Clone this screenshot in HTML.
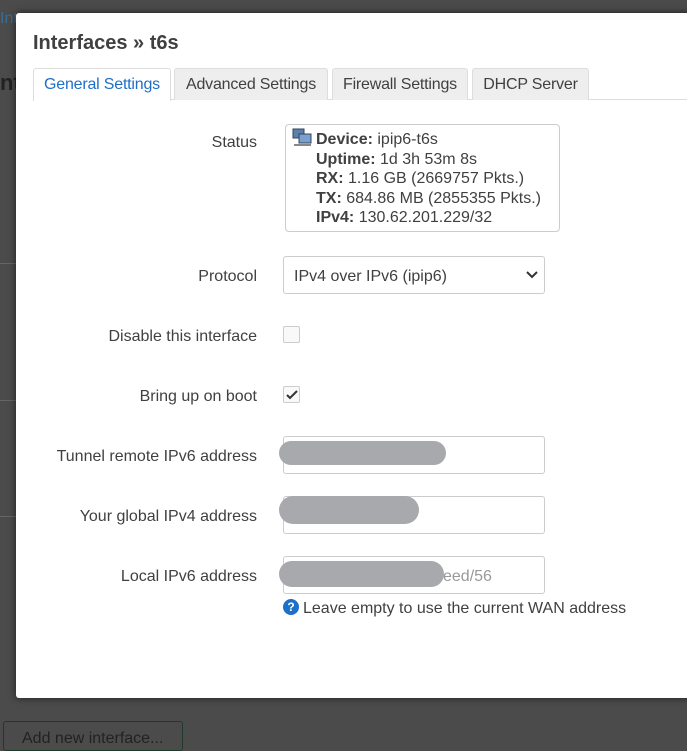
<!DOCTYPE html>
<html><head><style>
body{margin:0;width:687px;height:736px;background:#4b4b4b;font-family:"Liberation Sans",sans-serif;position:relative;overflow:hidden;color:#404040}
.a{position:absolute}
.modal{left:16px;top:13px;width:680px;height:685px;background:#fff;border-radius:3px;box-shadow:0 0 8px rgba(0,0,0,.6)}
.tab{position:absolute;top:68px;height:31px;line-height:32px;font-size:16px;background:#eee;border:1px solid #ddd;border-bottom:none;border-radius:3px 3px 0 0;text-align:center;color:#404040;letter-spacing:-0.2px}
.lbl{position:absolute;right:430px;font-size:16px;color:#404040;text-align:right;white-space:nowrap}
.inp{position:absolute;left:283px;width:260px;height:36px;border:1px solid #ccc;border-radius:3px;background:#fff}
.blur{position:absolute;background:#a8a9ac;border-radius:14px;height:24px}
.cb{position:absolute;left:283px;width:15px;height:15px;border:1px solid #ccc;border-radius:2px;background:#f9f9f9}
</style></head><body>
<div class="a" style="left:0;top:8px;width:18px;height:22px;color:#3d6c8f;font-size:16px;line-height:22px">Int</div>
<div class="a" style="left:0;top:70px;font-size:22px;font-weight:bold;color:#222">nt</div>
<div class="a" style="left:0;top:263px;width:16px;height:1px;background:#666"></div>
<div class="a" style="left:0;top:400px;width:16px;height:1px;background:#666"></div>
<div class="a" style="left:0;top:516px;width:16px;height:1px;background:#666"></div>
<div class="a" style="left:3px;top:721px;width:180px;height:30px;border:1px solid #1f3a2a;border-radius:3px;color:#222;font-size:16px;padding:8px 0 0 18px;box-sizing:border-box">Add new interface...</div>
<div class="a modal"></div>
<div class="a" style="left:33px;top:32px;font-size:20px;font-weight:bold;color:#404040">Interfaces » t6s</div>
<div class="a" style="left:33px;top:99px;width:654px;height:1px;background:#ddd"></div>
<div class="tab" style="left:33px;width:136px;background:#fff;color:#1e6fc8;height:32px">General Settings</div>
<div class="tab" style="left:174px;width:152px">Advanced Settings</div>
<div class="tab" style="left:332px;width:134px">Firewall Settings</div>
<div class="tab" style="left:472px;width:115px">DHCP Server</div>

<div class="lbl" style="top:134px">Status</div>
<div class="a" style="left:285px;top:124px;width:273px;height:106px;border:1px solid #ccc;border-radius:4px"></div>
<svg class="a" style="left:291px;top:128px" width="22" height="22" viewBox="0 0 22 22"><rect x="2" y="1" width="11" height="9" fill="#5b7fb0" stroke="#345"/><rect x="8" y="6" width="12" height="9" fill="#7aa0d0" stroke="#345"/><rect x="3" y="16" width="17" height="2" fill="#888"/></svg>
<div class="a" style="left:316px;top:130px;font-size:16px;line-height:19.5px;color:#404040"><b>Device:</b> ipip6-t6s<br><b>Uptime:</b> 1d 3h 53m 8s<br><b>RX:</b> 1.16 GB (2669757 Pkts.)<br><b>TX:</b> 684.86 MB (2855355 Pkts.)<br><b>IPv4:</b> 130.62.201.229/32</div>

<div class="lbl" style="top:268px">Protocol</div>
<div class="inp" style="top:256px;height:36px;width:260px"></div>
<div class="a" style="left:294px;top:268px;font-size:16px">IPv4 over IPv6 (ipip6)</div>
<svg class="a" style="left:526px;top:270px" width="12" height="10"><path d="M1 2l5 5 5-5" stroke="#333" stroke-width="2" fill="none"/></svg>

<div class="lbl" style="top:328px">Disable this interface</div>
<div class="cb" style="top:326px"></div>
<div class="lbl" style="top:388px">Bring up on boot</div>
<div class="cb" style="top:386px"></div>
<svg class="a" style="left:283px;top:386px" width="17" height="17"><path d="M4 9l3 3 7-7" stroke="#333" stroke-width="2" fill="none"/></svg>

<div class="lbl" style="top:448px">Tunnel remote IPv6 address</div>
<div class="inp" style="top:436px"></div>
<div class="blur" style="left:279px;top:441px;width:167px"></div>
<div class="lbl" style="top:508px">Your global IPv4 address</div>
<div class="inp" style="top:496px"></div>
<div class="blur" style="left:279px;top:496px;width:140px;height:28px"></div>
<div class="lbl" style="top:568px">Local IPv6 address</div>
<div class="inp" style="top:556px"></div>
<div class="a" style="left:443px;top:568px;font-size:16px;color:#999">eed/56</div>
<div class="blur" style="left:279px;top:561px;width:165px;height:26px"></div>
<div class="a" style="left:283px;top:599px;width:16px;height:16px;border-radius:50%;background:#1e6fc8;color:#fff;font-size:12px;font-weight:bold;text-align:center;line-height:16px">?</div>
<div class="a" style="left:303px;top:600px;font-size:16px;color:#404040">Leave empty to use the current WAN address</div>
</body></html>
